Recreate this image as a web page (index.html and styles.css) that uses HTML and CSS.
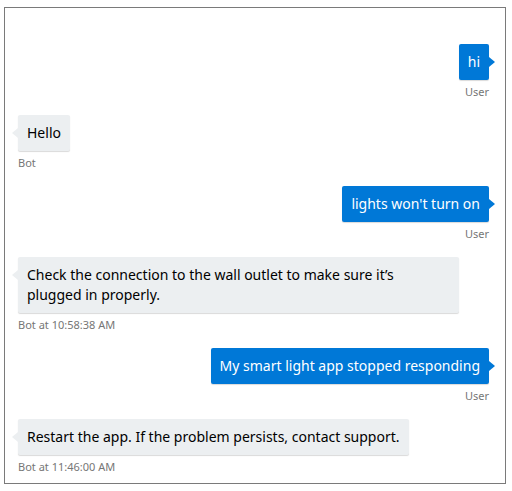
FILE: index.html
```html
<!DOCTYPE html>
<html lang="en">
<head>
    <meta charset="UTF-8">
    <title>Chat</title>
    <link rel="stylesheet" href="styles.css">
</head>
<body>
    <div class="chat">
        <div class="message from-user">
            <div class="bubble">hi</div>
            <div class="meta">User</div>
        </div>
        <div class="message from-bot">
            <div class="bubble">Hello</div>
            <div class="meta">Bot</div>
        </div>
        <div class="message from-user">
            <div class="bubble">lights won't turn on</div>
            <div class="meta">User</div>
        </div>
        <div class="message from-bot">
            <div class="bubble">Check the connection to the wall outlet to make sure it’s plugged in properly.</div>
            <div class="meta">Bot at 10:58:38 AM</div>
        </div>
        <div class="message from-user">
            <div class="bubble">My smart light app stopped responding</div>
            <div class="meta">User</div>
        </div>
        <div class="message from-bot">
            <div class="bubble">Restart the app. If the problem persists, contact support.</div>
            <div class="meta">Bot at 11:46:00 AM</div>
        </div>
    </div>
</body>
</html>
```

FILE: styles.css
```css
body {
    margin: 0;
    font-family: "Noto Sans", "Open Sans", Arial, sans-serif;
    background: #fff;
}

.chat {
    box-sizing: border-box;
    width: 502px;
    height: 477px;
    margin: 7px 0 0 4px;
    border: 1px solid #7a7a7a;
    padding: 0 16px 8px 13px;
    display: flex;
    flex-direction: column;
    justify-content: flex-end;
    gap: 15px;
}

.message {
    display: flex;
    flex-direction: column;
}

.from-user {
    align-items: flex-end;
}

.from-bot {
    align-items: flex-start;
    padding-right: 30px;
}

.bubble {
    position: relative;
    padding: 8px 9px;
    font-size: 14px;
    line-height: 20px;
    border-radius: 2px;
    box-shadow: 0 1px 1px rgba(0, 0, 0, 0.15);
}

.from-user .bubble {
    background: #0078d7;
    color: #fff;
}

.from-bot .bubble {
    background: #eceff1;
    color: #000;
}

.bubble::after {
    content: "";
    position: absolute;
    top: 13px;
    border-top: 5px solid transparent;
    border-bottom: 5px solid transparent;
}

.from-user .bubble::after {
    right: -6px;
    border-left: 6px solid #0078d7;
}

.from-bot .bubble::after {
    left: -6px;
    border-right: 6px solid #eceff1;
}

.meta {
    margin-top: 4px;
    font-size: 11px;
    line-height: 16px;
    color: #767676;
}
```
